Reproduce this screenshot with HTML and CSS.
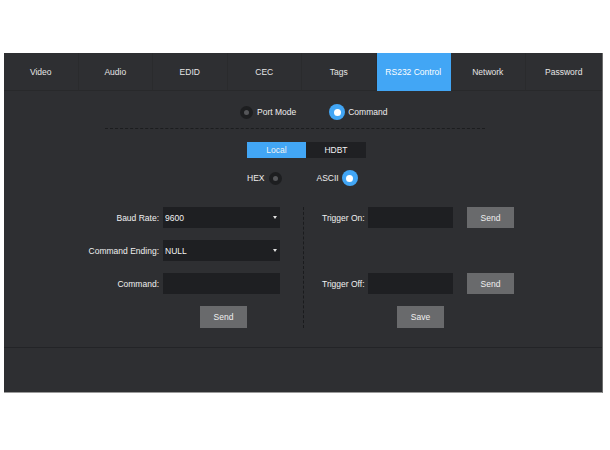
FILE: index.html
```html
<!DOCTYPE html>
<html lang="en">
<head>
<meta charset="utf-8">
<title>RS232 Control</title>
<link rel="stylesheet" href="styles.css">
</head>
<body>
<div class="panel">
  <nav class="tabs">
    <div class="tab">Video</div>
    <div class="tab">Audio</div>
    <div class="tab">EDID</div>
    <div class="tab">CEC</div>
    <div class="tab">Tags</div>
    <div class="tab active">RS232 Control</div>
    <div class="tab">Network</div>
    <div class="tab last">Password</div>
  </nav>
  <div class="content">
    <div class="mode-row">
      <label class="opt"><span class="radio"></span><span class="opt-text">Port Mode</span></label>
      <label class="opt opt-second"><span class="radio on"></span><span class="opt-text tight">Command</span></label>
    </div>
    <div class="dash-h"></div>
    <div class="seg">
      <span class="seg-btn active">Local</span>
      <span class="seg-btn">HDBT</span>
    </div>
    <div class="fmt-row">
      <label class="fmt"><span class="fmt-text">HEX</span><span class="radio"></span></label>
      <label class="fmt fmt-second"><span class="fmt-text tight">ASCII</span><span class="radio on"></span></label>
    </div>
    <div class="form">
      <div class="col-left">
        <span class="lbl">Baud Rate:</span>
        <div class="select"><select><option>9600</option></select></div>
        <span class="lbl">Command Ending:</span>
        <div class="select"><select><option>NULL</option></select></div>
        <span class="lbl">Command:</span>
        <input class="field" type="text">
        <span></span>
        <button class="btn send-left">Send</button>
      </div>
      <div class="col-right">
        <span class="lbl-r">Trigger On:</span>
        <input class="field" type="text">
        <button class="btn btn-end">Send</button>
        <div class="empty-row"></div>
        <span class="lbl-r">Trigger Off:</span>
        <input class="field" type="text">
        <button class="btn btn-end">Send</button>
        <div class="save-row"><button class="btn">Save</button></div>
      </div>
    </div>
  </div>
  <div class="footer"></div>
</div>
</body>
</html>
```
FILE: styles.css
```css
* { box-sizing: border-box; }
html, body { margin: 0; padding: 0; background: #ffffff; }
body {
  font-family: "Liberation Sans", Arial, sans-serif;
  font-size: 8.5px;
  color: #eeeeee;
}
.panel {
  margin: 53px 0 0 4px;
  width: 599px;
  background: #2e2f32;
  border-bottom: 1px solid #9a9a9a;
  border-right: 1px solid #6d6d6d;
}
.tabs {
  display: flex;
  height: 38px;
}
.tab {
  width: 74.5px;
  display: flex;
  align-items: center;
  justify-content: center;
  color: #e6e6e6;
  border-right: 1px solid #2a2b2d;
  border-bottom: 1px solid #28292b;
}
.tab.last { flex: 1; border-right: none; }
.tab.active {
  background: #42a6f5;
  color: #ffffff;
  border-color: #42a6f5;
}
.content {
  height: 256px;
  padding-top: 13px;
}
.mode-row {
  display: flex;
  align-items: center;
  height: 16px;
  padding-left: 236px;
}
.opt { display: flex; align-items: center; }
.opt-text { margin-left: 4px; }
.opt-text.tight { margin-left: 3px; }
.opt-second { margin-left: 33px; }
.radio {
  width: 13px;
  height: 13px;
  border-radius: 50%;
  background: #1d1e20;
  display: flex;
  align-items: center;
  justify-content: center;
  flex: none;
}
.radio::after {
  content: "";
  width: 5px;
  height: 5px;
  border-radius: 50%;
  background: #555659;
}
.radio.on {
  width: 16px;
  height: 16px;
  background: #42a6f5;
}
.radio.on::after {
  width: 7px;
  height: 7px;
  background: #ffffff;
}
.dash-h {
  margin: 8px 0 0 101px;
  width: 380px;
  border-top: 1px dashed #1c1d1f;
}
.seg {
  display: flex;
  margin: 13px 0 0 243px;
  height: 16px;
}
.seg-btn {
  width: 59px;
  display: flex;
  align-items: center;
  justify-content: center;
  background: #1f2023;
  color: #f2f2f2;
}
.seg-btn.active { background: #42a6f5; }
.seg-btn + .seg-btn { width: 60px; }
.fmt-row {
  display: flex;
  align-items: center;
  height: 16px;
  margin: 12px 0 0 243px;
}
.fmt { display: flex; align-items: center; }
.fmt-text { margin-right: 5px; }
.fmt-text.tight { margin-right: 3px; }
.fmt-second { margin-left: 34px; }
.form {
  display: flex;
  margin-top: 21px;
}
.col-left {
  width: 299px;
  display: grid;
  grid-template-columns: 155px 117px;
  grid-template-rows: 21px 21px 21px 22px;
  column-gap: 4px;
  row-gap: 12px;
  align-items: center;
}
.col-left .btn { grid-row: 4; }
.col-left > span:nth-of-type(4) { grid-row: 4; }
.lbl { text-align: right; color: #f0f0f0; }
.select { position: relative; height: 21px; }
.select select {
  -webkit-appearance: none;
  appearance: none;
  width: 100%;
  height: 21px;
  border: none;
  border-radius: 0;
  background: #1e1f22;
  color: #f2f2f2;
  font-family: "Liberation Sans", Arial, sans-serif;
  font-size: 8.5px;
  padding: 0 0 0 2px;
  outline: none;
}
.select::after {
  content: "";
  position: absolute;
  right: 3px;
  top: 9px;
  border-left: 2px solid transparent;
  border-right: 2px solid transparent;
  border-top: 3px solid #e0e0e0;
}
.field {
  height: 21px;
  width: 100%;
  border: none;
  border-radius: 0;
  background: #1e1f22;
  color: #f2f2f2;
  outline: none;
  padding: 0 2px;
}
.btn {
  width: 47px;
  height: 22px;
  border: none;
  border-radius: 0;
  background: #696a6c;
  color: #f0f0f0;
  font-family: "Liberation Sans", Arial, sans-serif;
  font-size: 8.5px;
  padding: 0;
}
.send-left { margin-left: 37px; }
.col-right {
  border-left: 1px dashed #1a1b1d;
  padding-left: 18px;
  display: grid;
  grid-template-columns: 42px 85px 57px;
  grid-template-rows: 21px 21px 21px 22px;
  column-gap: 4px;
  row-gap: 12px;
  align-items: center;
}
.lbl-r { color: #f0f0f0; white-space: nowrap; }
.btn-end { justify-self: end; height: 21px; }
.empty-row { grid-column: 1 / -1; height: 21px; }
.save-row { grid-column: 1 / -1; padding-left: 75px; height: 22px; }
.footer {
  height: 45px;
  border-top: 1px solid #232427;
}
```
